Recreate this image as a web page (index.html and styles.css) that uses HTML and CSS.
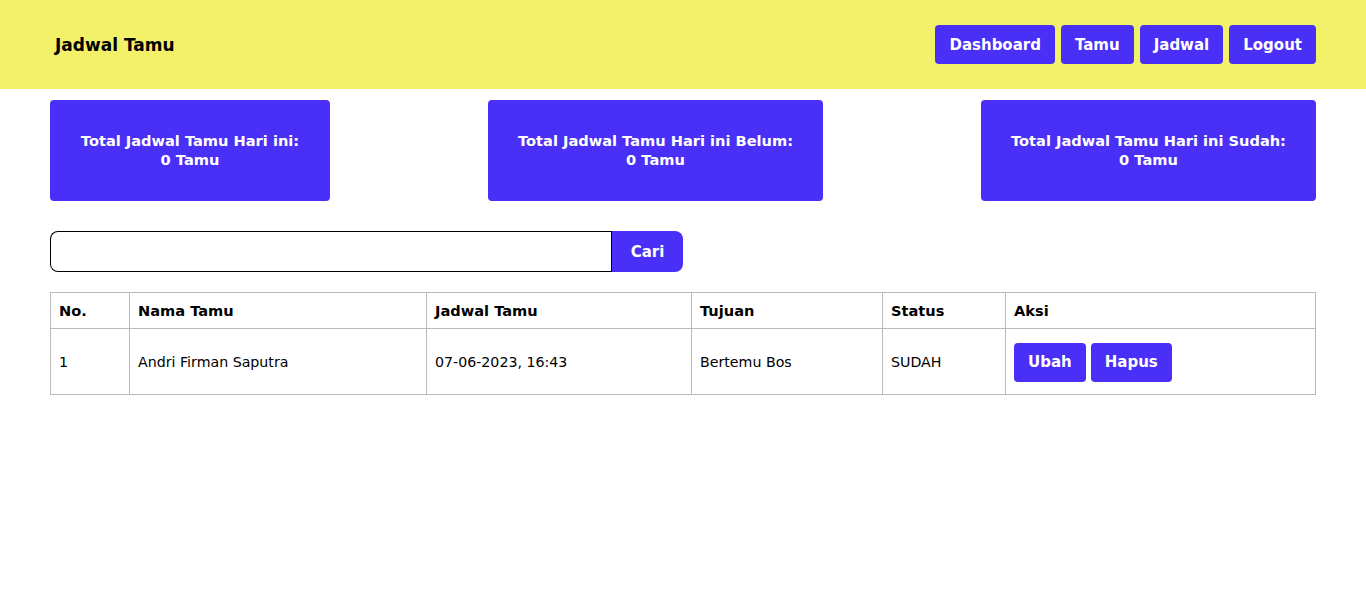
FILE: index.html
```html
<!DOCTYPE html>
<html lang="id">
<head>
<meta charset="utf-8">
<title>Jadwal Tamu</title>
<link rel="stylesheet" href="styles.css">
</head>
<body>
<header class="topbar">
  <div class="brand">Jadwal Tamu</div>
  <nav class="nav">
    <a class="btn nav-btn" href="#">Dashboard</a>
    <a class="btn nav-btn" href="#">Tamu</a>
    <a class="btn nav-btn" href="#">Jadwal</a>
    <a class="btn nav-btn" href="#">Logout</a>
  </nav>
</header>
<main class="content">
  <section class="cards">
    <div class="card card-sm">Total Jadwal Tamu Hari ini:<br>0 Tamu</div>
    <div class="card">Total Jadwal Tamu Hari ini Belum:<br>0 Tamu</div>
    <div class="card">Total Jadwal Tamu Hari ini Sudah:<br>0 Tamu</div>
  </section>
  <form class="search">
    <input class="search-input" type="text">
    <button class="search-btn" type="button">Cari</button>
  </form>
  <table class="table">
    <thead>
      <tr>
        <th class="c-no">No.</th>
        <th class="c-nama">Nama Tamu</th>
        <th class="c-jadwal">Jadwal Tamu</th>
        <th class="c-tujuan">Tujuan</th>
        <th class="c-status">Status</th>
        <th>Aksi</th>
      </tr>
    </thead>
    <tbody>
      <tr>
        <td>1</td>
        <td>Andri Firman Saputra</td>
        <td>07-06-2023, 16:43</td>
        <td>Bertemu Bos</td>
        <td>SUDAH</td>
        <td class="aksi"><a class="btn act-btn" href="#">Ubah</a><a class="btn act-btn" href="#">Hapus</a></td>
      </tr>
    </tbody>
  </table>
</main>
</body>
</html>
```
FILE: styles.css
```css
* { box-sizing: border-box; }
body {
  margin: 0;
  font-family: "DejaVu Sans", Verdana, sans-serif;
  font-size: 15px;
  color: #000;
  background: #fff;
}
.topbar {
  height: 89px;
  background: #f3f06a;
  display: flex;
  align-items: center;
  justify-content: space-between;
  padding: 0 50px 0 55px;
}
.brand {
  font-weight: bold;
  font-size: 17px;
  padding-top: 1px;
}
.nav {
  display: flex;
  gap: 6px;
}
.btn {
  display: inline-flex;
  align-items: center;
  justify-content: center;
  background: #4a2ff6;
  color: #fff;
  font-weight: bold;
  text-decoration: none;
  border-radius: 4px;
}
.nav-btn {
  height: 39px;
  padding: 0 14px;
  font-size: 15px;
}
.content {
  padding: 11px 50px 0 50px;
}
.cards {
  display: flex;
  justify-content: space-between;
}
.card {
  width: 335px;
  height: 101px;
  padding-bottom: 2px;
  background: #4a2ff6;
  color: #fff;
  font-weight: bold;
  border-radius: 4px;
  display: flex;
  align-items: center;
  justify-content: center;
  text-align: center;
  line-height: 19px;
  font-size: 14.6px;
}
.card-sm { width: 280px; }
.search {
  display: flex;
  margin-top: 30px;
}
.search-input {
  width: 561px;
  height: 41px;
  border: 1px solid #000;
  border-right: none;
  border-radius: 8px 0 0 8px;
  margin: 0;
  padding: 0 10px;
  font: inherit;
}
.search-btn {
  width: 72px;
  height: 41px;
  border: none;
  border-left: 1px solid #000;
  background: #4a2ff6;
  color: #fff;
  font: inherit;
  font-weight: bold;
  border-radius: 0 8px 8px 0;
  margin: 0;
}
.table {
  margin-top: 20px;
  width: 100%;
  border-collapse: collapse;
}
.table th, .table td {
  border: 1px solid #bbb;
  text-align: left;
  padding: 0 8px;
}
.table th { height: 36px; font-size: 14.6px; }
.table td { height: 66px; font-weight: normal; font-size: 14.2px; padding-top: 1px; }
.c-no { width: 79px; }
.c-nama { width: 297px; }
.c-jadwal { width: 265px; }
.c-tujuan { width: 191px; }
.c-status { width: 123px; }
.aksi .act-btn { height: 39px; padding: 0 14px; margin-right: 5px; font-size: 15px; }
```
